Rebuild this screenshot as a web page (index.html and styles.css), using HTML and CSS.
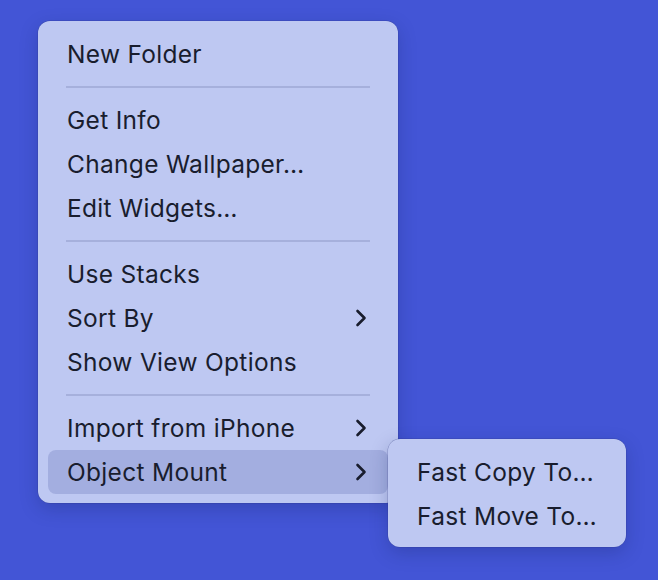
FILE: index.html
```html
<!DOCTYPE html>
<html>
<head>
<meta charset="utf-8">
<link rel="stylesheet" href="styles.css">
</head>
<body>
<div class="desk">
  <div class="menu">
    <div class="item">New Folder</div>
    <div class="sep"></div>
    <div class="item">Get Info</div>
    <div class="item">Change Wallpaper…</div>
    <div class="item">Edit Widgets…</div>
    <div class="sep"></div>
    <div class="item">Use Stacks</div>
    <div class="item">Sort By <svg class="chev" width="12" height="18" viewBox="0 0 12 18"><path d="M2.5 2 L9.5 9 L2.5 16" /></svg></div>
    <div class="item">Show View Options</div>
    <div class="sep"></div>
    <div class="item">Import from iPhone <svg class="chev" width="12" height="18" viewBox="0 0 12 18"><path d="M2.5 2 L9.5 9 L2.5 16" /></svg></div>
    <div class="item active">Object Mount <svg class="chev" width="12" height="18" viewBox="0 0 12 18"><path d="M2.5 2 L9.5 9 L2.5 16" /></svg>
      <div class="menu sub">
        <div class="item">Fast Copy To…</div>
        <div class="item">Fast Move To…</div>
      </div>
    </div>
  </div>
</div>
</body>
</html>
```
FILE: styles.css
```css
html, body {
  margin: 0;
  padding: 0;
  width: 658px;
  height: 580px;
  overflow: hidden;
  background: #4355d6;
}
.desk {
  padding: 21px 0 0 38px;
}
.menu {
  width: 360px;
  box-sizing: border-box;
  background: #bec8f2;
  border-radius: 12px;
  padding: 11px 10px 9px;
  box-shadow: 0 0 0 0.5px rgba(40, 50, 120, 0.35), 0 6px 18px rgba(20, 30, 90, 0.25);
  font-family: Inter, "Noto Sans", sans-serif;
  font-size: 24.5px;
  color: #191d2e;
}
.item {
  height: 44px;
  display: flex;
  align-items: center;
  justify-content: space-between;
  padding: 0 19px;
  border-radius: 8px;
  position: relative;
  letter-spacing: 0.3px;
  white-space: nowrap;
}
.item.active {
  background: #a3aee0;
}
.chev {
  margin-right: 2px;
}
.chev path {
  fill: none;
  stroke: #191d2e;
  stroke-width: 2.6;
  stroke-linecap: round;
  stroke-linejoin: round;
}
.sep {
  height: 22px;
  display: flex;
  align-items: center;
  padding: 0 18px;
}
.sep::before {
  content: "";
  flex: 1;
  height: 2px;
  background: #a6b0dc;
}
.sub {
  position: absolute;
  left: 340px;
  top: -11px;
  width: 238px;
  padding: 11px 0 9px;
}
.sub .item {
  padding: 0 29px;
}
```
